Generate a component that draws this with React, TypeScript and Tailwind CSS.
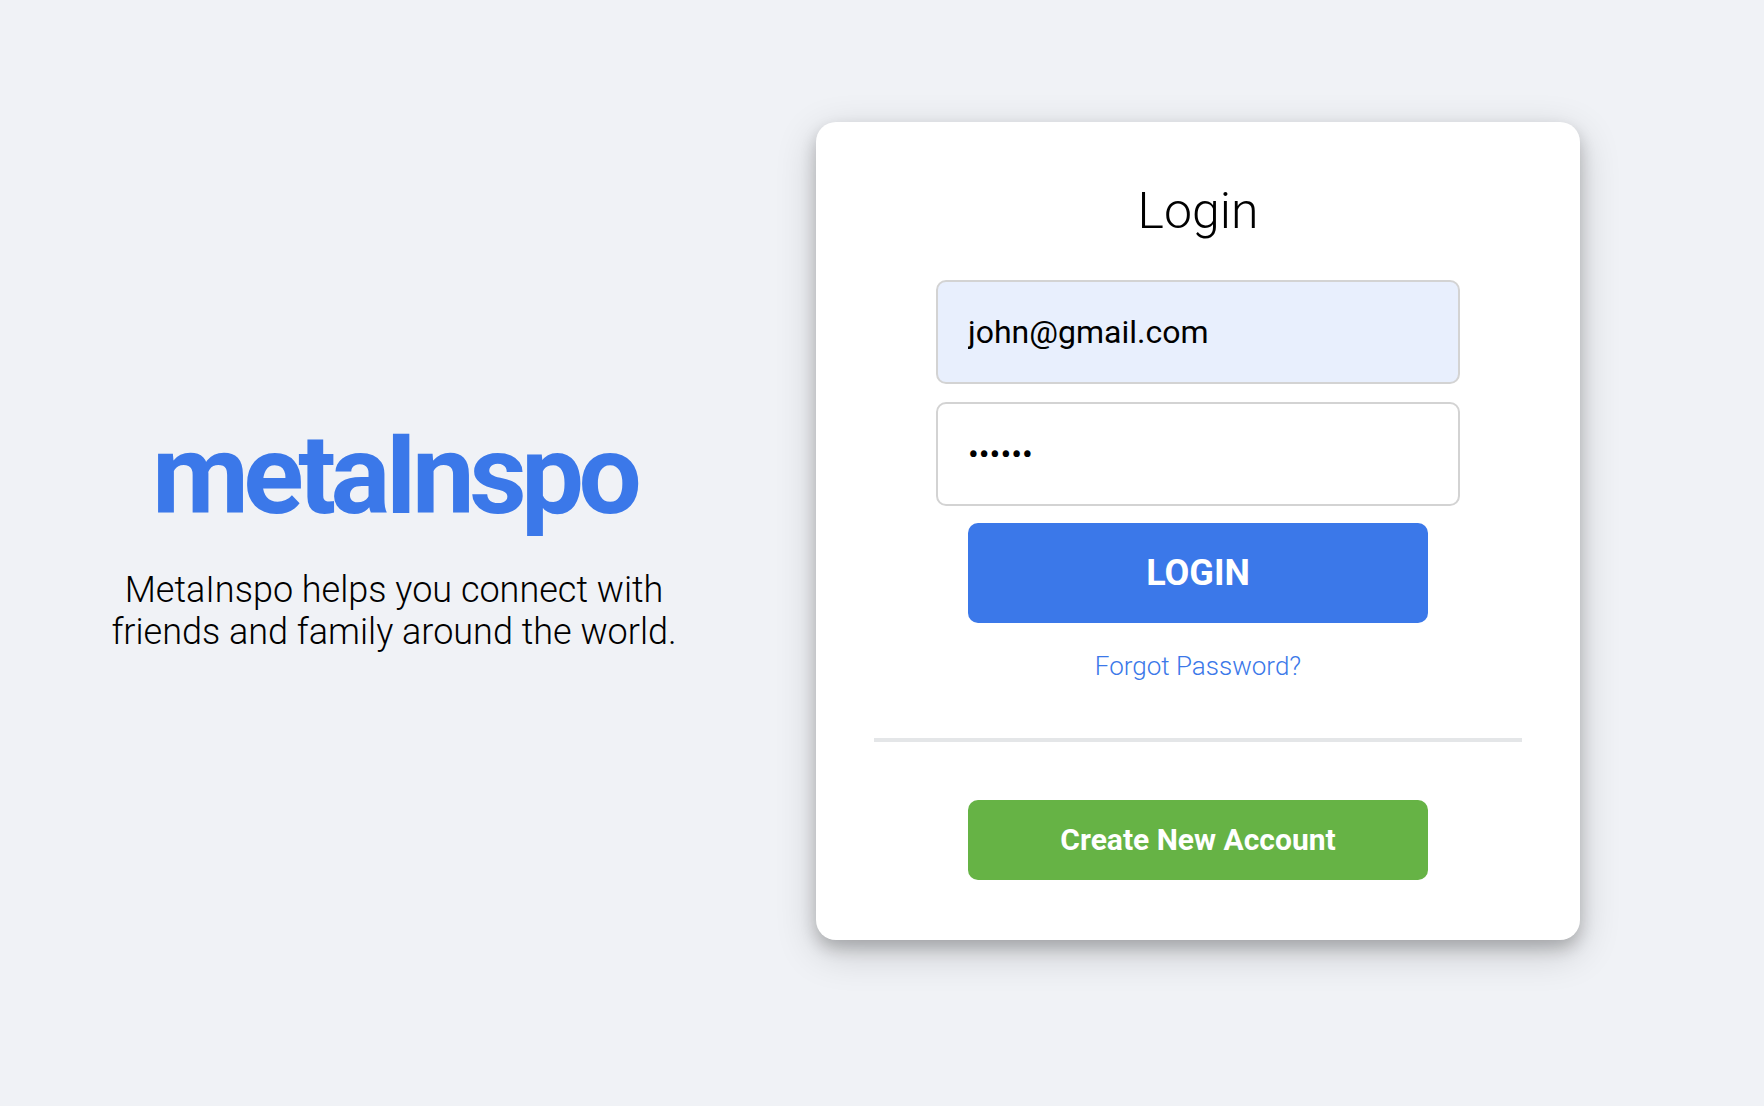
export default function App() {
  const field =
    "block h-[104px] w-full rounded-[10px] border-2 border-[#d3d3d3] px-[30px] text-[32px] font-normal text-black outline-none";

  return (
    <main className="flex min-h-screen items-center gap-7 bg-[#f0f2f6] pr-[184px] pb-11 font-['Roboto',sans-serif] font-light text-black">
      <section className="flex flex-1 flex-col items-center gap-7 text-center">
        <h1 className="text-[112px] leading-[132px] font-bold tracking-tighter text-[#3b78e9]">metaInspo</h1>
        <p className="text-[36px] leading-[42px]">
          MetaInspo helps you connect with
          <br />
          friends and family around the world.
        </p>
      </section>

      <section className="flex w-full max-w-[764px] flex-col items-center rounded-[20px] bg-white px-[58px] py-[60px] shadow-[0_8px_16px_rgba(0,0,0,0.2),0_12px_40px_rgba(0,0,0,0.19)]">
        <h2 className="text-[50px] leading-[58px]">Login</h2>
        <form className="mt-10 flex w-full flex-col items-center" onSubmit={(e) => e.preventDefault()}>
          <div className="flex w-full max-w-[524px] flex-col gap-[18px]">
            <input
              type="email"
              aria-label="Email"
              defaultValue="john@gmail.com"
              className={`${field} bg-[#e8effd]`}
            />
            <input
              type="password"
              aria-label="Password"
              defaultValue="secret"
              className={`${field} bg-white`}
            />
          </div>
          <button
            type="submit"
            className="mt-[17px] h-[100px] w-full max-w-[460px] rounded-[10px] bg-[#3b78e9] text-[36px] font-bold text-white"
          >
            LOGIN
          </button>
          <a href="#forgot" className="mt-7 text-[26px] leading-[30px] text-[#3b78e9]">
            Forgot Password?
          </a>
          <hr className="mt-[57px] w-full border-0 border-t-4 border-[#e4e6e8]" />
          <button
            type="button"
            className="mt-[58px] h-20 w-full max-w-[460px] rounded-[10px] bg-[#66b345] pb-0.5 text-[30px] font-bold text-white"
          >
            Create New Account
          </button>
        </form>
      </section>
    </main>
  );
}
